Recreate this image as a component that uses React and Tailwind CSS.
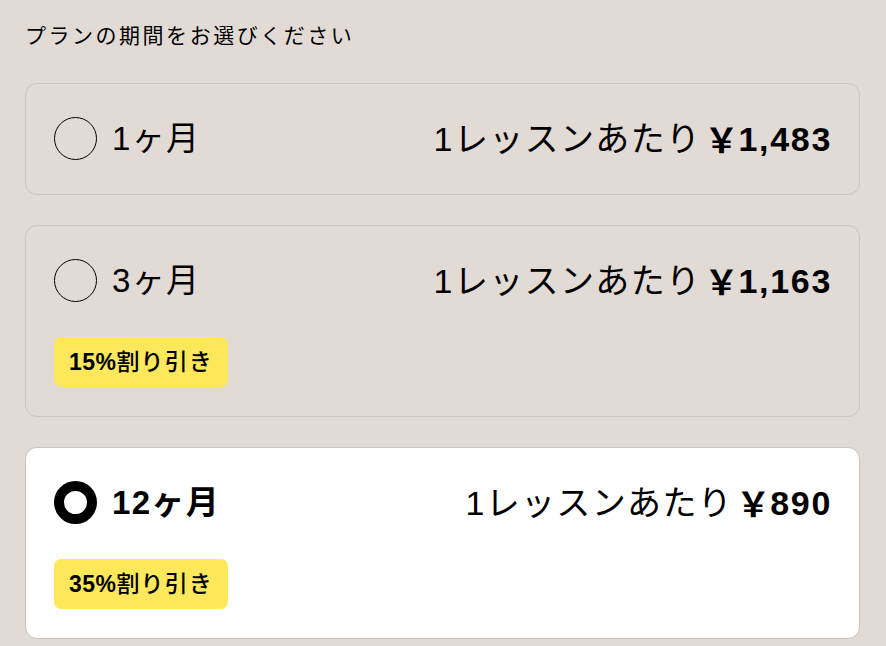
export default function App() {
  const plans = [
    { label: "1ヶ月", price: "1,483", badge: null, selected: false },
    { label: "3ヶ月", price: "1,163", badge: ["15%", "割り引き"], selected: false },
    { label: "12ヶ月", price: "890", badge: ["35%", "割り引き"], selected: true },
  ];

  return (
    <div
      className="min-h-screen bg-[#e2dbd5] pl-[25px] pr-[26px] pt-[22px] pb-4 text-black"
      style={{ fontFamily: '"Liberation Sans", "Noto Sans CJK JP", sans-serif' }}
    >
      <p className="text-[21px] leading-[28px] tracking-[0.12em] mb-[33px]">
        プランの期間をお選びください
      </p>

      <div className="flex flex-col gap-[30px]">
        {plans.map((p) => (
          <div
            key={p.label}
            className={
              "flex flex-col rounded-[12px] border border-[#cbc3bc] pl-[28px] pr-[29px] " +
              (p.badge ? "pt-[33px] pb-[29px] " : "pt-[33px] pb-[34px] ") +
              (p.selected ? "bg-white" : "bg-[#e2dbd5]")
            }
          >
            <div className="flex items-center justify-between h-[43px]">
              <div className="flex items-center gap-[15px]">
                {p.selected ? (
                  <span className="w-[43px] h-[43px] rounded-full border-[10px] border-black bg-white" />
                ) : (
                  <span className="w-[43px] h-[43px] rounded-full border border-black" />
                )}
                <span
                  className={
                    "text-[33px] leading-none tracking-[0.04em] " +
                    (p.selected ? "font-bold" : "")
                  }
                >
                  {p.label}
                </span>
              </div>
              <div className="flex items-center text-[34px] leading-none">
                <span className="tracking-[0.04em]">1レッスンあたり</span>
                <span className="font-bold flex items-center ml-[3px]">
                  <span style={{ fontFamily: '"Noto Sans CJK JP", sans-serif' }}>￥</span>
                  <span className="tracking-[0.05em] -mr-[2px]">{p.price}</span>
                </span>
              </div>
            </div>
            {p.badge && (
              <div className="flex mt-[35px]">
                <span className="flex items-center h-[50px] px-[15px] rounded-[7px] bg-[#fce85a] text-[23px] leading-none">
                  <span className="font-bold tracking-[0.02em]">{p.badge[0]}</span>
                  <span className="font-medium tracking-[0.05em]">{p.badge[1]}</span>
                </span>
              </div>
            )}
          </div>
        ))}
      </div>
    </div>
  );
}
